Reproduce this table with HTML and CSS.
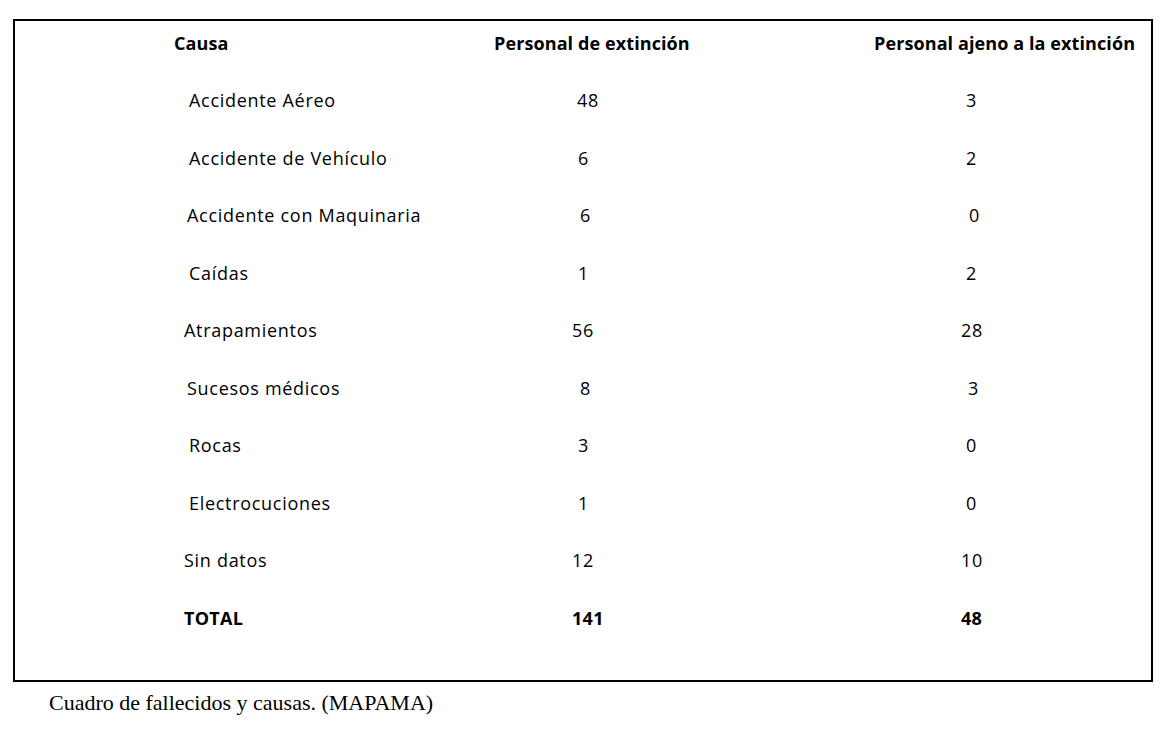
FILE: index.html
```html
<!DOCTYPE html>
<html lang="es">
<head>
<meta charset="utf-8">
<title>Cuadro de fallecidos y causas</title>
<link rel="stylesheet" href="styles.css">
</head>
<body>
<div class="box">
  <div class="row head">
    <div class="cell h1">Causa</div>
    <div class="cell h2">Personal de extinción</div>
    <div class="cell h3">Personal ajeno a la extinción</div>
  </div>
  <div class="row">
    <div class="cell o5">Accidente Aéreo</div>
    <div class="cell o5">48</div>
    <div class="cell o5">3</div>
  </div>
  <div class="row">
    <div class="cell o5">Accidente de Vehículo</div>
    <div class="cell o6">6</div>
    <div class="cell o5">2</div>
  </div>
  <div class="row">
    <div class="cell o3">Accidente con Maquinaria</div>
    <div class="cell o8">6</div>
    <div class="cell o8">0</div>
  </div>
  <div class="row">
    <div class="cell o5">Caídas</div>
    <div class="cell o6">1</div>
    <div class="cell o5">2</div>
  </div>
  <div class="row">
    <div class="cell">Atrapamientos</div>
    <div class="cell">56</div>
    <div class="cell">28</div>
  </div>
  <div class="row">
    <div class="cell o3">Sucesos médicos</div>
    <div class="cell o8">8</div>
    <div class="cell o7">3</div>
  </div>
  <div class="row">
    <div class="cell o5">Rocas</div>
    <div class="cell o6">3</div>
    <div class="cell o5">0</div>
  </div>
  <div class="row">
    <div class="cell o5">Electrocuciones</div>
    <div class="cell o6">1</div>
    <div class="cell o5">0</div>
  </div>
  <div class="row">
    <div class="cell">Sin datos</div>
    <div class="cell">12</div>
    <div class="cell">10</div>
  </div>
  <div class="row total">
    <div class="cell">TOTAL</div>
    <div class="cell">141</div>
    <div class="cell">48</div>
  </div>
</div>
<p class="caption">Cuadro de fallecidos y causas. (MAPAMA)</p>
</body>
</html>
```

FILE: styles.css
```css
html, body {
  margin: 0;
  padding: 0;
  background: #ffffff;
}
body {
  padding: 19px 0 0 13px;
  color: #000000;
  font-family: "Open Sans", "Liberation Sans", sans-serif;
  font-size: 18px;
}
.box {
  box-sizing: border-box;
  width: 1140px;
  height: 663px;
  border: 2px solid #000000;
  padding: 0 0 0 169px;
}
.row {
  display: grid;
  grid-template-columns: 388px 389px 1fr;
  height: 57.5px;
  line-height: 57.5px;
  white-space: nowrap;
  letter-spacing: 0.7px;
}
.row.head {
  height: 44px;
  line-height: 44px;
  margin-bottom: 7.25px;
  font-weight: 700;
  letter-spacing: 0.1px;
}
.row.total {
  font-weight: 700;
  letter-spacing: 0.3px;
}
.h1 { margin-left: -10px; }
.h2 { margin-left: -78px; }
.h3 { margin-left: -87px; }
.o3 { padding-left: 3px; }
.o5 { padding-left: 5px; }
.o6 { padding-left: 6px; }
.o7 { padding-left: 7px; }
.o8 { padding-left: 8px; }
.caption {
  margin: 9px 0 0 36px;
  font-family: "Liberation Serif", "Times New Roman", serif;
  font-size: 22px;
  line-height: 24px;
}
```
